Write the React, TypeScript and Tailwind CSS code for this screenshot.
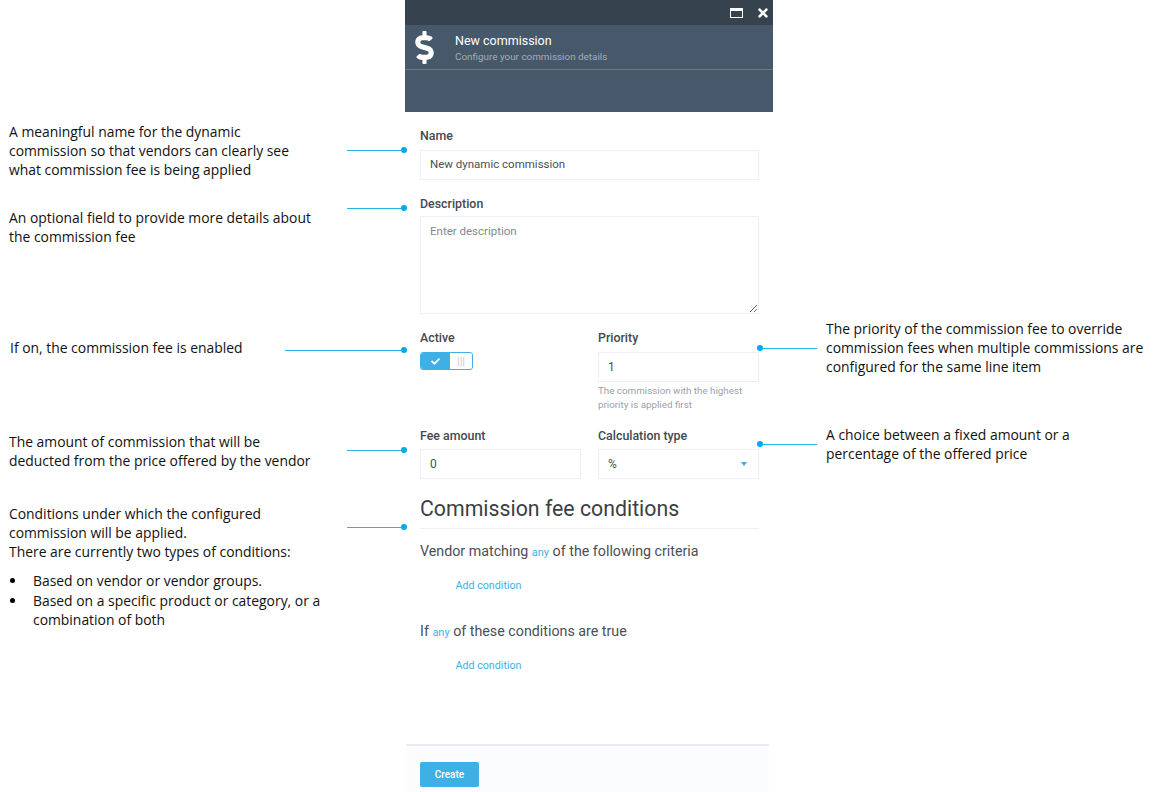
import { FaCheck, FaDollarSign, FaTimes } from "react-icons/fa";

const noteFont = "font-['Open_Sans',sans-serif] text-[13.9px] leading-[19px] text-[#111]";

function Line({ width }: { width: string }) {
  return (
    <div className={`flex items-center ${width}`}>
      <div className="h-px flex-1 bg-[#29b2ea]" />
      <div className="h-1.5 w-1.5 rounded-full bg-[#00a8f0]" />
    </div>
  );
}

function RightLine() {
  return (
    <div className="flex w-[60px] items-center">
      <div className="h-1.5 w-1.5 shrink-0 rounded-full bg-[#00a8f0]" />
      <div className="h-px flex-1 bg-[#29b2ea]" />
    </div>
  );
}

function Bullet() {
  return (
    <span className="flex h-[19px] w-6 shrink-0 items-center pl-[1px]">
      <span className="h-[5px] w-[5px] rounded-full bg-black" />
    </span>
  );
}

function Label({ children }: { children: React.ReactNode }) {
  return <div className="h-[18px] text-[12.4px] font-medium leading-[18px] text-[#44494e]">{children}</div>;
}

const inputCls =
  "block w-full h-[30px] border border-[#eceff5] bg-white px-[9px] text-[11.5px] text-[#4a4f55] outline-none";

function App() {
  return (
    <div className="flex h-[792px] w-[1156px] overflow-hidden bg-white">
      {/* left annotations */}
      <div className="relative z-10 -mr-[2px] w-[407px] shrink-0 pl-[9px]">
        <div className="mt-[122px] flex h-[57px] items-start">
          <p className={`${noteFont} w-[338px]`}>
            A meaningful name for the dynamic
            <br />
            commission so that vendors can clearly see
            <br />
            what commission fee is being applied
          </p>
          <div className="mt-[25px]"><Line width="w-[60px]" /></div>
        </div>
        <div className="mt-[29px] flex h-[38px] items-start">
          <p className={`${noteFont} w-[338px]`}>
            An optional field to provide more details about
            <br />
            the commission fee
          </p>
          <div className="mt-[-3px]"><Line width="w-[60px]" /></div>
        </div>
        <div className="mt-[92px] flex h-[19px] items-start">
          <p className={`${noteFont} ml-px w-[275px]`}>If on, the commission fee is enabled</p>
          <div className="mt-[9px]"><Line width="w-[122px]" /></div>
        </div>
        <div className="mt-[75px] flex h-[38px] items-start">
          <p className={`${noteFont} w-[338px]`}>
            The amount of commission that will be
            <br />
            deducted from the price offered by the vendor
          </p>
          <div className="mt-[15px]"><Line width="w-[60px]" /></div>
        </div>
        <div className="mt-[34px] flex items-start">
          <div className="w-[338px]">
            <p className={noteFont}>
              Conditions under which the configured
              <br />
              commission will be applied.
              <br />
              There are currently two types of conditions:
            </p>
            <ul className={`${noteFont} mt-[10px]`}>
              <li className="flex">
                <Bullet />
                <span>Based on vendor or vendor groups.</span>
              </li>
              <li className="mt-px flex">
                <Bullet />
                <span className="w-[300px]">
                  Based on a specific product or category, or a
                  <br />
                  combination of both
                </span>
              </li>
            </ul>
          </div>
          <div className="mt-[20px]"><Line width="w-[60px]" /></div>
        </div>
      </div>

      {/* center panel */}
      <div className="w-[368px] shrink-0 font-['Roboto',sans-serif]">
        <header className="h-[112px] bg-[#46586a]">
          <div className="flex h-[25px] items-center justify-end gap-[14px] bg-[#36434f] pr-[4px] text-white">
            <div className="h-[10px] w-[13px] border border-t-[3px] border-white" />
            <FaTimes className="h-[14px] w-[12px]" />
          </div>
          <div className="flex h-[45px] border-b border-[#6b7b8a] pl-[10px]">
            <FaDollarSign className="mt-[6px] h-[33px] w-[19px] text-white" />
            <div className="ml-[21px] mt-[8px]">
              <div className="text-[12.5px] leading-[15px] text-white">New commission</div>
              <div className="mt-[2px] text-[9.9px] leading-[14px] text-[#a3aeb9]">Configure your commission details</div>
            </div>
          </div>
        </header>

        <form className="pl-[15px] pr-[14px]">
          <div className="mt-[15px]"><Label>Name</Label></div>
          <input className={`${inputCls} mt-[5px] pb-[2px]`} readOnly value="New dynamic commission" />
          <div className="mt-[15px]"><Label>Description</Label></div>
          <textarea
            className="mt-[3px] block h-[98px] w-full border border-[#eceff5] px-[9px] py-[6px] text-[11.5px] text-[#4a4f55] outline-none placeholder:text-[#85898e]"
            placeholder="Enter description"
          />
          <div className="mt-[15px] flex gap-[17px]">
            <div className="w-[161px]">
              <Label>Active</Label>
              <div className="mt-[5px] flex h-[18px] w-[53px] overflow-hidden rounded-[3px] border border-[#3fb0e6]">
                <div className="flex w-[29px] items-center justify-center bg-[#3fb0e6] text-white">
                  <FaCheck className="h-[9px] w-[11px]" />
                </div>
                <div className="flex flex-1 items-center justify-center rounded-[3px] bg-white text-[11px] leading-none text-[#c5c9cd]">
                  |||
                </div>
              </div>
            </div>
            <div className="flex-1">
              <Label>Priority</Label>
              <input className={`${inputCls} mt-[5px] text-[12px]`} readOnly value="1" />
              <p className="mt-[2px] text-[9.8px] leading-[14px] text-[#9aa1ab]">
                The commission with the highest
                <br />
                priority is applied first
              </p>
            </div>
          </div>
          <div className="mt-[15px] flex gap-[17px]">
            <div className="w-[161px]">
              <Label>Fee amount</Label>
              <input className={`${inputCls} mt-[4px] text-[12px]`} readOnly value="0" />
            </div>
            <div className="flex-1">
              <Label>Calculation type</Label>
              <div className="mt-[4px] flex h-[30px] items-center justify-between border border-[#eceff5] pl-[9px] pr-[11px] text-[12px] text-[#4a4f55]">
                <span>%</span>
                <span className="h-0 w-0 border-x-[3.5px] border-t-[4px] border-x-transparent border-t-[#3fa7dc]" />
              </div>
            </div>
          </div>
          <h2 className="mt-[15px] border-b border-[#eceff5] pb-[5px] text-[21.3px] font-normal leading-[29px] text-[#3a3f44]">
            Commission fee conditions
          </h2>
          <div className="mt-[12px] text-[14.25px] leading-[20px] text-[#4a4f55]">
            Vendor matching <span className="text-[11px] text-[#3fb0e6]">any</span> of the following criteria
          </div>
          <div className="ml-[35.5px] mt-[16px] text-[10.7px] leading-[14px] text-[#3fb0e6]">Add condition</div>
          <div className="mt-[28px] text-[14.25px] leading-[20px] text-[#4a4f55]">
            If <span className="text-[11px] text-[#3fb0e6]">any</span> of these conditions are true
          </div>
          <div className="ml-[35.5px] mt-[16px] text-[10.7px] leading-[14px] text-[#3fb0e6]">Add condition</div>
        </form>

        <footer className="ml-px mt-[71px] h-[48px] w-[363px] border-t-2 border-[#eaeef3] bg-[#fbfcfd] pl-[14px] pt-[15px]">
          <button type="button" className="h-[25px] w-[59px] rounded-[2px] bg-[#3fb0e6] text-[10px] font-medium text-white">
            Create
          </button>
        </footer>
      </div>

      {/* right annotations */}
      <div className="min-w-0 flex-1">
        <div className="-ml-[16px] mt-[319px] flex items-start">
          <div className="mt-[26px]"><RightLine /></div>
          <p className={`${noteFont} ml-[9px] whitespace-nowrap`}>
            The priority of the commission fee to override
            <br />
            commission fees when multiple commissions are
            <br />
            configured for the same line item
          </p>
        </div>
        <div className="-ml-[16px] mt-[49px] flex items-start">
          <div className="mt-[16px]"><RightLine /></div>
          <p className={`${noteFont} ml-[9px] whitespace-nowrap`}>
            A choice between a fixed amount or a
            <br />
            percentage of the offered price
          </p>
        </div>
      </div>
    </div>
  );
}

export default App;
